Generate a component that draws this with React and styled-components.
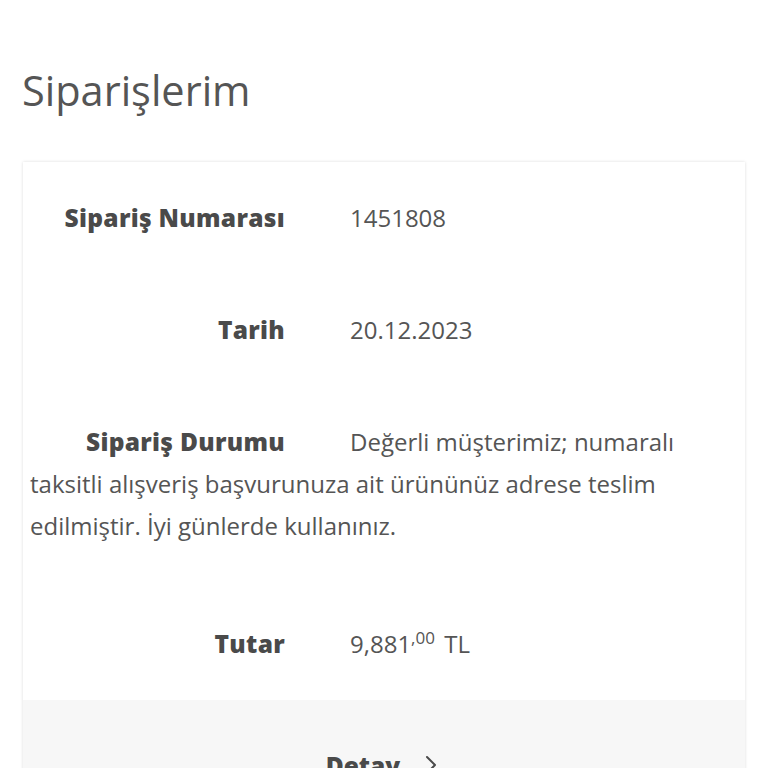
import React from 'react';
import styled, { createGlobalStyle } from 'styled-components';

const GlobalStyle = createGlobalStyle`
  body {
    margin: 0;
    background: #ffffff;
    font-family: "Open Sans", Lato, sans-serif;
    color: #555555;
  }
`;

const Page = styled.div`
  padding: 66px 23px 0 22px;
`;

const Title = styled.h1`
  margin: 0 0 48px 0;
  font-size: 41.5px;
  line-height: 48px;
  font-weight: 400;
  color: #555555;
`;

const Card = styled.div`
  width: 722px;
  margin-left: 1px;
  background: #fff;
  box-shadow: 0 0 3px rgba(0, 0, 0, 0.14);
`;

const Row = styled.div`
  padding: ${p => p.$top || 35}px 20px 35px 7px;
  font-size: 24px;
  line-height: 42px;
`;

const Label = styled.span`
  display: inline-block;
  width: 255px;
  text-align: right;
  font-weight: 800;
  font-size: 24.5px;
  letter-spacing: 0.3px;
  color: #4a4a4a;
`;

const Value = styled.span`
  margin-left: 65px;
  color: #555555;
  font-weight: 400;
`;

const Sup = styled.sup`
  font-size: 17px;
  vertical-align: 9px;
  line-height: 0;
  margin-right: 3px;
`;

const Footer = styled.div`
  background: #f7f7f7;
  height: 130px;
  display: flex;
  align-items: center;
  justify-content: center;
  gap: 18px;
  font-size: 24.5px;
  font-weight: 800;
  color: #4a4a4a;
`;

function Chevron() {
  return (
    <svg width="24" height="24" viewBox="0 0 24 24" fill="none" stroke="#4a4a4a" strokeWidth="2" strokeLinecap="round" strokeLinejoin="round">
      <path d="M9 4l8 8-8 8" />
    </svg>
  );
}

export default function App() {
  return (
    <Page>
      <GlobalStyle />
      <Title>Siparişlerim</Title>
      <Card>
        <Row>
          <Label>Sipariş Numarası</Label>
          <Value>1451808</Value>
        </Row>
        <Row>
          <Label>Tarih</Label>
          <Value>20.12.2023</Value>
        </Row>
        <Row>
          <Label>Sipariş Durumu</Label>
          <Value>Değerli müşterimiz; numaralı taksitli alışveriş başvurunuza ait ürününüz adrese teslim edilmiştir. İyi günlerde kullanınız.</Value>
        </Row>
        <Row $top={41}>
          <Label>Tutar</Label>
          <Value>9,881<Sup>,00</Sup> TL</Value>
        </Row>
        <Footer>
          Detay <Chevron />
        </Footer>
      </Card>
    </Page>
  );
}
